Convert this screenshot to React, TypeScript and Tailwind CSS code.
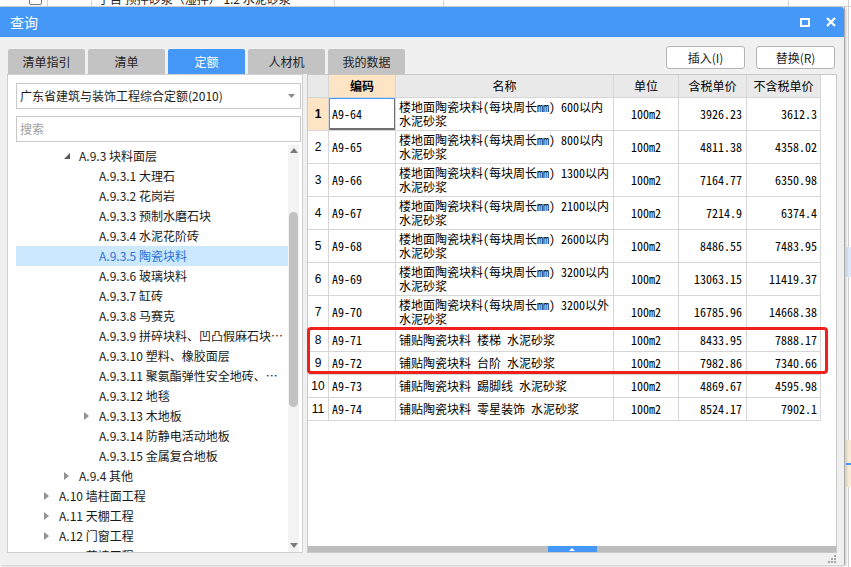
import React from 'react';

const ui = "font-['Noto_Sans_CJK_SC',sans-serif]";
const sim = "font-['Noto_Sans_Mono_CJK_SC','Liberation_Mono','Noto_Sans_CJK_SC',monospace]";

type TreeNode = { label: string; level: 0 | 1 | 2; icon?: 'open' | 'closed'; selected?: boolean };

const tree: TreeNode[] = [
  { label: 'A.9.3 块料面层', level: 1, icon: 'open' },
  { label: 'A.9.3.1 大理石', level: 2 },
  { label: 'A.9.3.2 花岗岩', level: 2 },
  { label: 'A.9.3.3 预制水磨石块', level: 2 },
  { label: 'A.9.3.4 水泥花阶砖', level: 2 },
  { label: 'A.9.3.5 陶瓷块料', level: 2, selected: true },
  { label: 'A.9.3.6 玻璃块料', level: 2 },
  { label: 'A.9.3.7 缸砖', level: 2 },
  { label: 'A.9.3.8 马赛克', level: 2 },
  { label: 'A.9.3.9 拼碎块料、凹凸假麻石块…', level: 2 },
  { label: 'A.9.3.10 塑料、橡胶面层', level: 2 },
  { label: 'A.9.3.11 聚氨酯弹性安全地砖、…', level: 2 },
  { label: 'A.9.3.12 地毯', level: 2 },
  { label: 'A.9.3.13 木地板', level: 2, icon: 'closed' },
  { label: 'A.9.3.14 防静电活动地板', level: 2 },
  { label: 'A.9.3.15 金属复合地板', level: 2 },
  { label: 'A.9.4 其他', level: 1, icon: 'closed' },
  { label: 'A.10 墙柱面工程', level: 0, icon: 'closed' },
  { label: 'A.11 天棚工程', level: 0, icon: 'closed' },
  { label: 'A.12 门窗工程', level: 0, icon: 'closed' },
  { label: 'A.13 幕墙工程', level: 0, icon: 'closed' },
];

const indent = { 0: 'pl-[28px]', 1: 'pl-[48px]', 2: 'pl-[68px]' };

type Row = { code: string; name: string[]; price: string; net: string };

const longName = '楼地面陶瓷块料(每块周长mm) ';
const rows: Row[] = [
  { code: 'A9-64', name: [longName + '600以内', '水泥砂浆'], price: '3926.23', net: '3612.3' },
  { code: 'A9-65', name: [longName + '800以内', '水泥砂浆'], price: '4811.38', net: '4358.02' },
  { code: 'A9-66', name: [longName + '1300以内', '水泥砂浆'], price: '7164.77', net: '6350.98' },
  { code: 'A9-67', name: [longName + '2100以内', '水泥砂浆'], price: '7214.9', net: '6374.4' },
  { code: 'A9-68', name: [longName + '2600以内', '水泥砂浆'], price: '8486.55', net: '7483.95' },
  { code: 'A9-69', name: [longName + '3200以内', '水泥砂浆'], price: '13063.15', net: '11419.37' },
  { code: 'A9-70', name: [longName + '3200以外', '水泥砂浆'], price: '16785.96', net: '14668.38' },
  { code: 'A9-71', name: ['铺贴陶瓷块料 楼梯 水泥砂浆'], price: '8433.95', net: '7888.17' },
  { code: 'A9-72', name: ['铺贴陶瓷块料 台阶 水泥砂浆'], price: '7982.86', net: '7340.66' },
  { code: 'A9-73', name: ['铺贴陶瓷块料 踢脚线 水泥砂浆'], price: '4869.67', net: '4595.98' },
  { code: 'A9-74', name: ['铺贴陶瓷块料 零星装饰 水泥砂浆'], price: '8524.17', net: '7902.1' },
];

const tabs = ['清单指引', '清单', '定额', '人材机', '我的数据'];

const cell = 'border-r border-b border-[#d6d6d6] overflow-hidden whitespace-nowrap';

export default function App() {
  return (
    <div className={`relative w-[851px] h-[567px] overflow-hidden bg-white ${ui}`}>
      {/* spreadsheet behind the dialog */}
      <div className="absolute left-0 top-[-9px] w-full h-[16px] flex border-b border-[#d6d6d6] text-[12px] leading-[16px] text-[#222]">
        <div className="w-[48px] border-r border-[#d6d6d6] flex items-center justify-end pr-[5px]">
          <div className="w-[13px] h-[13px] border border-[#777] rounded-[2px] bg-white" />
        </div>
        <div className="w-[44px] border-r border-[#d6d6d6]" />
        <div className="w-[243px] border-r border-[#d6d6d6] pl-[6px]">子目 预拌砂浆（湿拌） 1:2 水泥砂浆</div>
        <div className="w-[109px] border-r border-[#d6d6d6]" />
        <div className="w-[345px] border-r border-[#d6d6d6]" />
        <div className="flex-1" />
      </div>
      <div className="absolute left-[848px] top-0 w-px h-full bg-[#d0d0d0]" />
      <div className="absolute left-[846px] top-[247px] w-[5px] h-[30px] bg-[#dde9f8]" />
      <div className="absolute left-[846px] top-[440px] w-[5px] h-[47px] bg-[#f6ecd8]" />
      <div className="absolute left-[846px] top-[463px] w-[5px] h-[2px] bg-[#4a9df8]" />

      {/* dialog window */}
      <div className="absolute left-0 top-[7px] w-[845px] h-[558px] flex flex-col bg-[#f0f0f0] border-r border-[#a8a8a8] shadow-[1px_1px_3px_rgba(0,0,0,0.25)]">
        <div className="h-[30px] bg-[#4598f7] flex items-center justify-between pl-[10px] pr-[8px] text-white text-[14px] rounded-tr-[3px]">
          <span>查询</span>
          <div className="flex items-center gap-[16px]">
            <svg width="10" height="9" viewBox="0 0 10 9">
              <rect x="1" y="1" width="8" height="7" fill="none" stroke="white" strokeWidth="2" />
            </svg>
            <svg width="10" height="10" viewBox="0 0 10 10">
              <path d="M1 1L9 9M9 1L1 9" stroke="white" strokeWidth="2.2" />
            </svg>
          </div>
        </div>

        <div className="flex-1 flex flex-col px-[7px]">
          {/* tabs + buttons */}
          <div className="h-[37px] flex justify-between">
            <div className="flex items-end gap-[3px] pl-[1px]">
              {tabs.map(t => (
                <div
                  key={t}
                  className={`w-[77px] h-[25px] flex items-center justify-center text-[12px] rounded-t-[2px] ${
                    t === '定额' ? 'bg-[#4598f7] text-white' : 'bg-[#c3c3c3] text-[#1e1e1e]'
                  }`}
                >
                  {t}
                </div>
              ))}
            </div>
            <div className="flex gap-[11px] mt-[9px] pr-[2px]">
              {['插入(I)', '替换(R)'].map(b => (
                <div
                  key={b}
                  className="w-[79px] h-[23px] bg-white border border-[#b4b4b4] rounded-[3px] flex items-center justify-center text-[12px] text-[#1e1e1e]"
                >
                  {b}
                </div>
              ))}
            </div>
          </div>

          {/* panels */}
          <div className="h-[479px] flex gap-[4px]">
            {/* left tree panel */}
            <div className="w-[296px] bg-white border border-[#d0d0d0] flex flex-col pl-[8px] pr-[1px] pt-[8px]">
              <div className="h-[26px] border border-[#c8c8c8] flex items-center justify-between pl-[3px] pr-[5px] text-[12px] text-[#1e1e1e]">
                <span>广东省建筑与装饰工程综合定额(2010)</span>
                <svg width="7" height="4" viewBox="0 0 7 4">
                  <polygon points="0,0 7,0 3.5,4" fill="#8a8a8a" />
                </svg>
              </div>
              <div className="mt-[7px] h-[26px] border border-[#c8c8c8] flex items-center pl-[3px] text-[12px] text-[#a0a0a0]">
                搜索
              </div>
              <div className="mt-[3px] flex-1 min-h-0 flex">
                <div className="flex-1 overflow-hidden pt-[1px]">
                  {tree.map(n => (
                    <div
                      key={n.label}
                      className={`h-[20px] flex items-center text-[12px] whitespace-nowrap ${indent[n.level]} ${
                        n.selected ? 'bg-[#cce8ff] text-[#2f6fd3]' : 'text-[#1a1a1a]'
                      }`}
                    >
                      <div className="w-[15px] h-[20px] flex items-center">
                        {n.icon === 'open' && (
                          <svg width="6" height="6" viewBox="0 0 6 6">
                            <polygon points="6,0 6,6 0,6" fill="#5a5a5a" />
                          </svg>
                        )}
                        {n.icon === 'closed' && (
                          <svg width="5" height="8" viewBox="0 0 5 8">
                            <polygon points="0,0 5,4 0,8" fill="#929292" />
                          </svg>
                        )}
                      </div>
                      <span>{n.label}</span>
                    </div>
                  ))}
                </div>
                <div className="w-[11px] mr-[2px] bg-[#f3f3f3] flex flex-col items-center">
                  <div className="h-[10px] flex items-center">
                    <svg width="8" height="5" viewBox="0 0 8 5">
                      <polygon points="0,5 4,0 8,5" fill="#7a7a7a" />
                    </svg>
                  </div>
                  <div className="mt-[57px] w-[9px] h-[195px] rounded-full bg-[#c2c2c2]" />
                  <div className="flex-1" />
                  <div className="h-[10px] flex items-center mb-[2px]">
                    <svg width="8" height="5" viewBox="0 0 8 5">
                      <polygon points="0,0 8,0 4,5" fill="#7a7a7a" />
                    </svg>
                  </div>
                </div>
              </div>
            </div>

            {/* right table panel */}
            <div className="flex-1 relative bg-white border border-[#c8c8c8] flex flex-col">
              <div className="flex-1 overflow-hidden">
                <div className="w-[513px] grid grid-cols-[21px_67px_218px_65px_68px_74px] text-black">
                  <div className={`${cell} h-[23px] bg-[#e9e9e9]`} />
                  <div className={`${cell} h-[23px] bg-[#fde4c4] flex items-center justify-center text-[12px] font-bold`}>编码</div>
                  {['名称', '单位', '含税单价', '不含税单价'].map(h => (
                    <div key={h} className={`${cell} h-[23px] bg-[#e9e9e9] flex items-center justify-center text-[12px]`}>
                      {h}
                    </div>
                  ))}
                  {rows.map((r, i) => {
                    const h = r.name.length > 1 ? 'h-[33px]' : 'h-[23px]';
                    return (
                      <React.Fragment key={r.code}>
                        <div
                          className={`${cell} ${h} flex items-center justify-center text-[12px] font-['Liberation_Sans',sans-serif] ${
                            i === 0 ? 'bg-[#fde4c4] font-bold' : ''
                          }`}
                        >
                          {i + 1}
                        </div>
                        <div
                          className={`${cell} ${h} flex items-center pl-[3px] text-[12px] ${sim} ${
                            i === 0 ? 'shadow-[inset_1px_1px_0_#4598f7,inset_-1px_-2px_0_#707070]' : ''
                          }`}
                        >
                          {r.code}
                        </div>
                        <div className={`${cell} ${h} flex flex-col justify-center pl-[3px] text-[12px] leading-[14px] ${sim}`}>
                          {r.name.map(l => (
                            <div key={l}>{l}</div>
                          ))}
                        </div>
                        <div className={`${cell} ${h} flex items-center justify-center text-[12px] ${sim}`}>100m2</div>
                        <div className={`${cell} ${h} flex items-center justify-end pr-[4px] text-[12px] ${sim}`}>{r.price}</div>
                        <div className={`${cell} ${h} flex items-center justify-end pr-[3px] text-[12px] ${sim}`}>{r.net}</div>
                      </React.Fragment>
                    );
                  })}
                </div>
              </div>
              <div className="h-[6px] bg-[#bdbdbd] flex justify-center">
                <div className="w-[49px] h-full bg-[#4598f7] flex items-center justify-center">
                  <svg width="6" height="3" viewBox="0 0 6 3">
                    <polygon points="0,3 3,0 6,3" fill="white" />
                  </svg>
                </div>
              </div>
              {/* highlight around rows 8 and 9 */}
              <div className="absolute left-[-1px] top-[252px] w-[521px] h-[47px] border-[3px] border-[#f0201c] rounded-[4px] pointer-events-none" />
            </div>
          </div>

          <div className="flex-1 flex justify-end items-end pb-[2px] pr-[1px]">
            <svg width="9" height="9" viewBox="0 0 9 9">
              <rect x="7" y="1" width="2" height="2" fill="#a5a5a5" />
              <rect x="4" y="4" width="2" height="2" fill="#a5a5a5" />
              <rect x="7" y="4" width="2" height="2" fill="#a5a5a5" />
              <rect x="1" y="7" width="2" height="2" fill="#a5a5a5" />
              <rect x="4" y="7" width="2" height="2" fill="#a5a5a5" />
              <rect x="7" y="7" width="2" height="2" fill="#a5a5a5" />
            </svg>
          </div>
        </div>
      </div>
    </div>
  );
}
